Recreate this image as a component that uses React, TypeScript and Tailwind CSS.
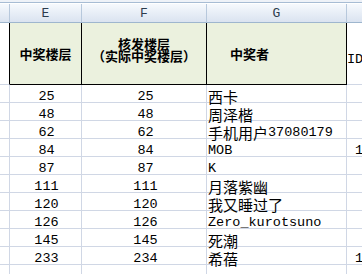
import React from "react";

const rows: { e: string; f: string; g: string; h?: string }[] = [
  { e: "25", f: "25", g: "西卡" },
  { e: "48", f: "48", g: "周泽楷" },
  { e: "62", f: "62", g: "手机用户37080179" },
  { e: "84", f: "84", g: "MOB", h: "1" },
  { e: "87", f: "87", g: "K" },
  { e: "111", f: "111", g: "月落紫幽" },
  { e: "120", f: "120", g: "我又睡过了" },
  { e: "126", f: "126", g: "Zero_kurotsuno" },
  { e: "145", f: "145", g: "死潮" },
  { e: "233", f: "234", g: "希蓓", h: "1" },
];

function Name({ text }: { text: string }) {
  const parts = text.match(/[\u3000-\u9fff\uff00-\uffef]+|[^\u3000-\u9fff\uff00-\uffef]+/g) || [];
  return (
    <>
      {parts.map((p, i) =>
        /[\u3000-\u9fff\uff00-\uffef]/.test(p) ? (
          <span key={i} className="font-[Noto_Sans_CJK_SC,sans-serif] text-[15px]">
            {p}
          </span>
        ) : (
          <span key={i}>{p}</span>
        )
      )}
    </>
  );
}

const grid = "grid grid-cols-[10px_72px_125px_140px_15px]";

export default function App() {
  return (
    <div className="w-[362px] h-[274px] overflow-hidden bg-white font-mono text-[13.5px] text-black">
      {/* frame top */}
      <div className="h-[2px] bg-[#eef2f8]" />
      <div className="h-[1px] bg-[#a7bcd4]" />
      <div className="h-[1px] bg-white" />
      {/* column letter header */}
      <div className={`${grid} h-[19px]`}>
        {["", "E", "F", "G", ""].map((l, i) => (
          <div
            key={i}
            className={`flex justify-center pt-[3px] leading-[14px] text-[13px] text-[#2c3b4d] bg-linear-to-b from-[#f6f9fd] to-[#dae3f0] border-b border-[#9eb6ce] ${
              i < 4 ? "border-r border-r-[#b7c8dc]" : ""
            }`}
          >
            {l}
          </div>
        ))}
      </div>
      {/* green header row */}
      <div className={`${grid} h-[62px]`}>
        <div className="border-r border-r-black border-b border-b-[#d0d7e5]" />
        <div className="bg-[#ebf1de] border-r border-b border-black flex items-center justify-center font-[Noto_Sans_CJK_SC,sans-serif] font-bold text-[13px] leading-[15px]">
          中奖楼层
        </div>
        <div className="bg-[#ebf1de] border-r border-b border-black flex flex-col items-center justify-center pb-[7px] font-[Noto_Sans_CJK_SC,sans-serif] font-bold text-[13px] leading-[12px]">
          <span>核发楼层</span>
          <span>（实际中奖楼层）</span>
        </div>
        <div className="bg-[#ebf1de] border-r border-b border-black flex items-center pl-[23px] font-[Noto_Sans_CJK_SC,sans-serif] font-bold text-[13px] leading-[15px]">
          中奖者
        </div>
        <div className="border-b border-[#d0d7e5] pt-[31px] leading-[11px] whitespace-nowrap overflow-hidden">
          ID
        </div>
      </div>
      {/* data rows */}
      {rows.map((r, i) => (
        <div key={i} className={`${grid} h-[18px] leading-[11px]`}>
          <div className="border-r border-b border-[#d0d7e5]" />
          <div className="border-r border-b border-[#d0d7e5] flex items-end justify-center pl-[2px]">
            {r.e}
          </div>
          <div className="border-r border-b border-[#d0d7e5] flex items-end justify-center pl-[3px]">
            {r.f}
          </div>
          <div className="border-r border-b border-[#d0d7e5] flex items-end pl-[1px] whitespace-nowrap">
            <Name text={r.g} />
          </div>
          <div className="border-b border-[#d0d7e5] flex items-end pl-[8px] whitespace-nowrap overflow-hidden">
            {r.h ?? ""}
          </div>
        </div>
      ))}
      <div className={`${grid} h-[18px]`}>
        <div className="border-r border-[#d0d7e5]" />
        <div className="border-r border-[#d0d7e5]" />
        <div className="border-r border-[#d0d7e5]" />
        <div className="border-r border-[#d0d7e5]" />
        <div />
      </div>
    </div>
  );
}
